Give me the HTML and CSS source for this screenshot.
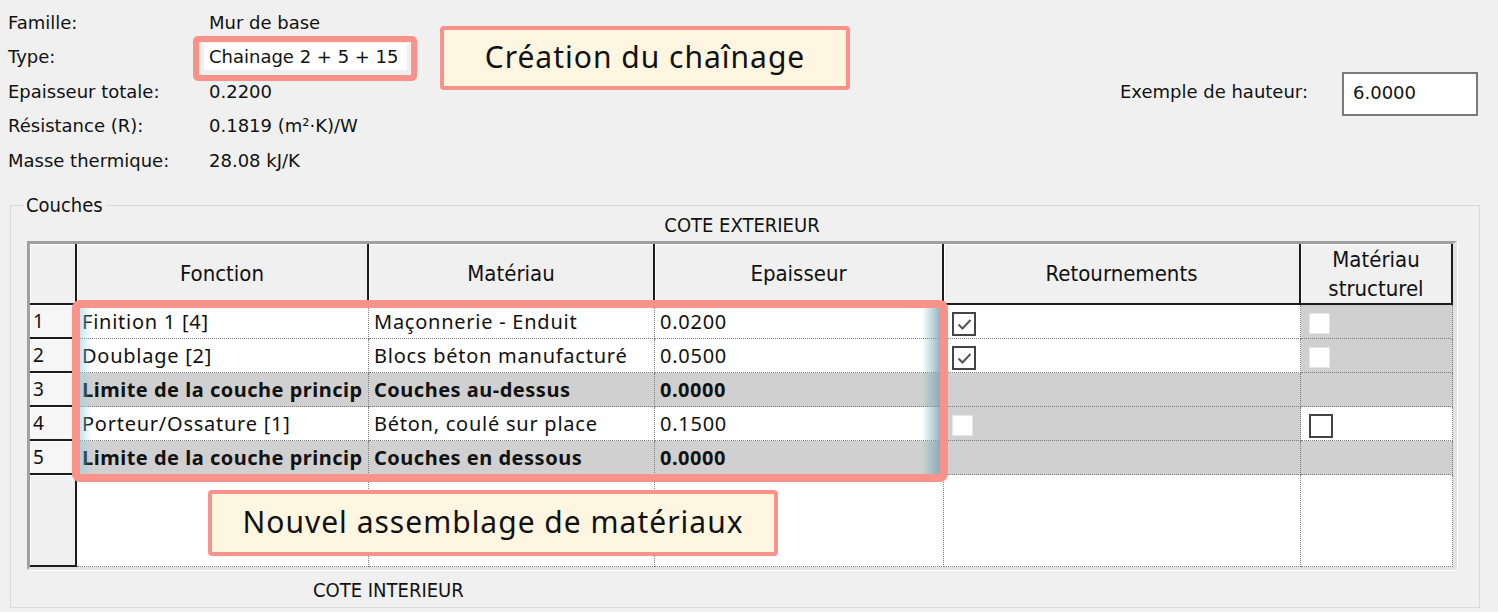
FILE: index.html
```html
<!DOCTYPE html>
<html lang="fr">
<head>
<meta charset="utf-8">
<title>Type properties</title>
<link rel="stylesheet" href="styles.css">
</head>
<body>
<div class="dialog">
  <div class="top">
    <div class="props">
      <div class="k">Famille:</div><div class="v">Mur de base</div>
      <div class="k">Type:</div><div class="v"><span class="typefield">Chainage 2 + 5 + 15</span></div>
      <div class="k">Epaisseur totale:</div><div class="v">0.2200</div>
      <div class="k">Résistance (R):</div><div class="v">0.1819 (m²·K)/W</div>
      <div class="k">Masse thermique:</div><div class="v">28.08 kJ/K</div>
    </div>
    <div class="height">
      <span class="hlabel">Exemple de hauteur:</span>
      <span class="hfield">6.0000</span>
    </div>
  </div>

  <fieldset class="layers">
    <legend>Couches</legend>
    <div class="side side-ext">COTE EXTERIEUR</div>
    <div class="grid-frame">
      <table class="grid">
        <colgroup>
          <col class="c-num"><col class="c-fn"><col class="c-mat"><col class="c-ep"><col class="c-ret"><col class="c-st">
        </colgroup>
        <thead>
          <tr>
            <th></th>
            <th>Fonction</th>
            <th>Matériau</th>
            <th>Epaisseur</th>
            <th>Retournements</th>
            <th>Matériau<br>structurel</th>
          </tr>
        </thead>
        <tbody>
          <tr>
            <td class="num">1</td>
            <td>Finition 1 [4]</td>
            <td>Maçonnerie - Enduit</td>
            <td>0.0200</td>
            <td class="chk"><span class="cb"><svg viewBox="0 0 19 19" width="19" height="19"><polyline points="3.5,9.5 7.5,13.5 15.5,5" fill="none" stroke="#555" stroke-width="2"/></svg></span></td>
            <td class="chk gray"><span class="cb-off"></span></td>
          </tr>
          <tr>
            <td class="num">2</td>
            <td>Doublage [2]</td>
            <td>Blocs béton manufacturé</td>
            <td>0.0500</td>
            <td class="chk"><span class="cb"><svg viewBox="0 0 19 19" width="19" height="19"><polyline points="3.5,9.5 7.5,13.5 15.5,5" fill="none" stroke="#555" stroke-width="2"/></svg></span></td>
            <td class="chk gray"><span class="cb-off"></span></td>
          </tr>
          <tr class="core">
            <td class="num">3</td>
            <td>Limite de la couche princip</td>
            <td>Couches au-dessus</td>
            <td>0.0000</td>
            <td class="gray"></td>
            <td class="gray"></td>
          </tr>
          <tr>
            <td class="num">4</td>
            <td>Porteur/Ossature [1]</td>
            <td>Béton, coulé sur place</td>
            <td>0.1500</td>
            <td class="chk gray"><span class="cb-off"></span></td>
            <td class="chk"><span class="cb"></span></td>
          </tr>
          <tr class="core">
            <td class="num">5</td>
            <td>Limite de la couche princip</td>
            <td>Couches en dessous</td>
            <td>0.0000</td>
            <td class="gray"></td>
            <td class="gray"></td>
          </tr>
          <tr class="blank">
            <td class="num"></td>
            <td></td><td></td><td></td><td></td><td></td>
          </tr>
        </tbody>
      </table>
    </div>
    <div class="side side-int">COTE INTERIEUR</div>
  </fieldset>

  <div class="hl-type"></div>
  <div class="callout c1">Création du chaînage</div>
  <div class="hl-rows"></div>
  <div class="callout c2">Nouvel assemblage de matériaux</div>
</div>
</body>
</html>
```

FILE: styles.css
```css
* { box-sizing: border-box; }
html, body { margin: 0; padding: 0; background: #f0f0f0; }

.dialog {
  position: relative;
  width: 1498px;
  height: 612px;
  overflow: hidden;
  background: #f0f0f0;
  color: #111;
  font-family: "DejaVu Sans", "Noto Sans", sans-serif;
  font-size: 18px;
}

/* ---------- top properties ---------- */
.top {
  display: flex;
  height: 195px;
}
.props {
  flex: 1;
  display: grid;
  grid-template-columns: 201px auto;
  grid-auto-rows: 34.5px;
  align-content: start;
  padding: 5px 0 0 8px;
}
.props .k, .props .v {
  display: flex;
  align-items: center;
  white-space: nowrap;
}
.typefield {
  display: inline-block;
  background: #fff;
  width: 203px;
  height: 27px;
  line-height: 27px;
  margin-left: -5px;
  padding-left: 5px;
}
.height {
  align-self: flex-start;
  display: flex;
  align-items: flex-start;
  gap: 34px;
  margin-top: 72px;
  margin-right: 20px;
  height: 44px;
}
.hlabel {
  line-height: 40px;
}
.hfield {
  display: flex;
  align-items: center;
  width: 136px;
  height: 44px;
  padding: 0 0 4px 9px;
  background: #fff;
  border: 2px solid #7a7a7a;
}

/* ---------- layers group ---------- */
.layers {
  margin: 0 18px 0 10px;
  padding: 0 22px 0 16px;
  border: 1px solid #d9d9d9;
  min-width: 0;
}
.layers legend {
  margin-left: -4px;
  padding: 0 3px;
  font-family: "DejaVu Sans Condensed", "DejaVu Sans", sans-serif;
  font-stretch: condensed;
  font-size: 20px;
  line-height: 20px;
}
.side {
  font-family: "DejaVu Sans Condensed", "DejaVu Sans", sans-serif;
  font-stretch: condensed;
  font-size: 20px;
  line-height: 22px;
  height: 22px;
}
.side-ext { text-align: center; margin-top: -1px; }
.side-int { padding-left: 286px; margin-top: 9px; margin-bottom: 6px; }

.grid-frame {
  margin-top: 5px;
  border-top: 3px solid #a0a0a0;
  border-left: 3px solid #a0a0a0;
  border-right: 4px solid #e3e3e3;
  border-bottom: 3px solid #e3e3e3;
  box-shadow: 1px 1px 0 #fff;
}
.grid {
  width: 100%;
  table-layout: fixed;
  border-collapse: separate;
  border-spacing: 0;
  background: #fff;
}
.c-num { width: 47px; }
.c-fn  { width: 292px; }
.c-mat { width: 286px; }
.c-ep  { width: 289px; }
.c-ret { width: 357px; }
.c-st  { width: 152px; }

.grid th {
  height: 61px;
  padding: 0;
  background: #f0f0f0;
  border-right: 2px solid #1c1c1c;
  border-bottom: 2px solid #1c1c1c;
  box-shadow: inset 1px 1px 0 #fff;
  font-family: "DejaVu Sans Condensed", "DejaVu Sans", sans-serif;
  font-stretch: condensed;
  font-weight: normal;
  font-size: 22px;
  line-height: 29px;
  text-align: center;
  color: #111;
}
.grid td {
  height: 34px;
  padding: 0 0 0 5px;
  border-right: 1px dotted #7c7c7c;
  border-bottom: 1px dotted #7c7c7c;
  font-family: "Noto Sans", sans-serif;
  font-size: 20px;
  letter-spacing: 0.75px;
  line-height: 24px;
  white-space: nowrap;
  overflow: hidden;
  vertical-align: middle;
  color: #111;
}
.grid td.num {
  padding-left: 3px;
  background: #f6f6f6;
  border-right: 2px solid #1c1c1c;
  border-bottom: 2px solid #1c1c1c;
  box-shadow: inset 1px 1px 0 #fff;
  font-size: 19px;
  letter-spacing: 0;
}
.grid tr.core td { background: #d0d0d0; font-weight: bold; letter-spacing: 0.5px; }
.grid tr.core td.num { background: #f6f6f6; font-weight: normal; letter-spacing: 0; }
.grid td.gray { background: #d0d0d0; }
.grid tr.blank td { height: 92px; }
.grid tr.blank td.num { background: #f0f0f0; }

.grid td.chk { padding: 4px 0 0 8px; }
.cb {
  display: block;
  width: 24px;
  height: 24px;
  border: 2px solid #444;
  background: #fff;
  padding: 1px;
}
.cb svg { display: block; }
.cb-off {
  display: block;
  width: 21px;
  height: 21px;
  background: #fff;
  border: 1px solid #e6e6e6;
}

/* ---------- annotations ---------- */
.hl-type {
  position: absolute;
  left: 193px;
  top: 36px;
  width: 224px;
  height: 45px;
  border: 6px solid #f8928a;
  border-radius: 5px;
}
.hl-rows {
  position: absolute;
  left: 72px;
  top: 300px;
  width: 876px;
  height: 182px;
  border: 8px solid #f8928a;
  border-radius: 8px;
  background: linear-gradient(to right,
    rgba(150, 210, 228, 0.55),
    rgba(150, 210, 228, 0) 12px,
    rgba(140, 180, 192, 0) calc(100% - 18px),
    rgba(120, 165, 180, 0.8));
}
.callout {
  position: absolute;
  display: flex;
  align-items: center;
  justify-content: center;
  padding-bottom: 4px;
  background: #fef6e0;
  border: 4px solid #f8928a;
  border-radius: 4px;
  font-family: "Noto Sans", sans-serif;
  font-size: 30px;
  letter-spacing: 1px;
  color: #111;
}
.c1 { left: 440px; top: 26px; width: 410px; height: 64px; }
.c2 { left: 208px; top: 490px; width: 570px; height: 66px; }
```
